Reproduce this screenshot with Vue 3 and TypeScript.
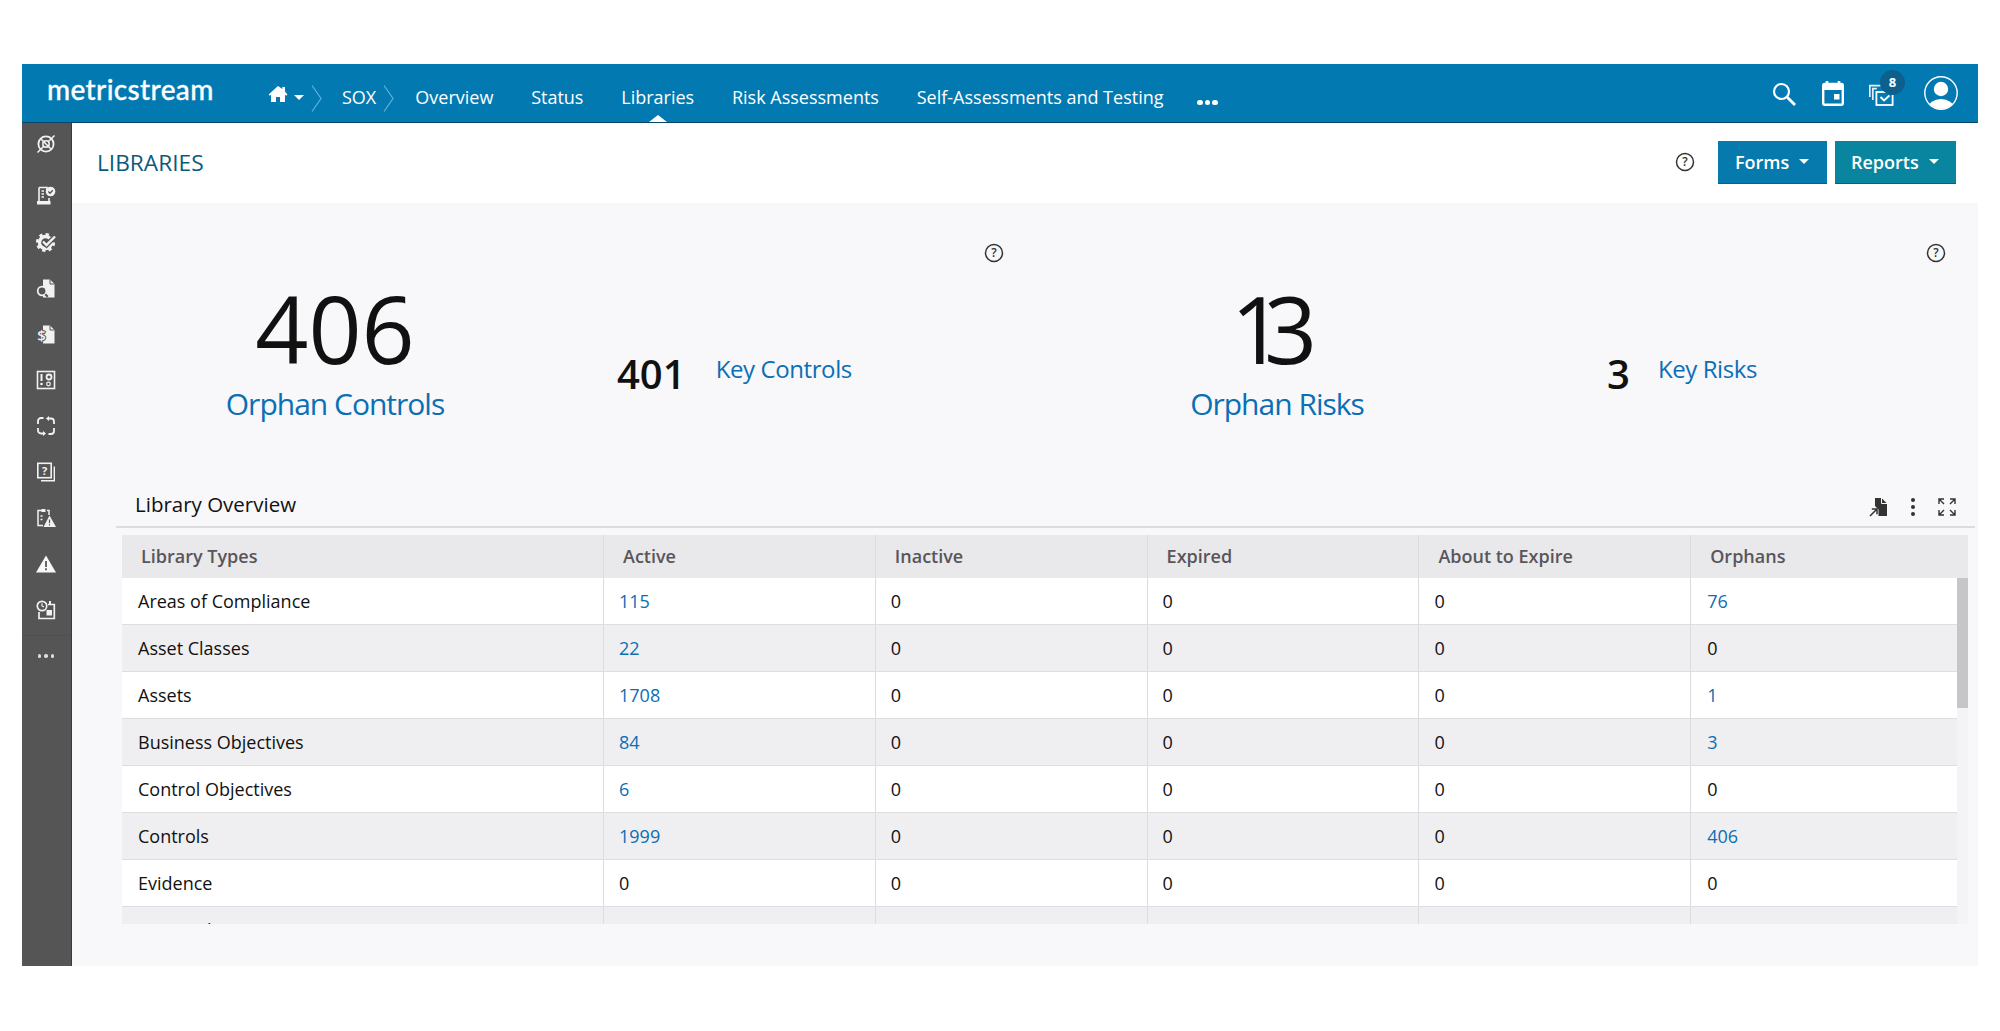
<script setup lang="ts">
interface Row {
  name: string
  values: (number | string)[]
  links: boolean[]
}

const navItems: string[] = ['Overview', 'Status', 'Libraries', 'Risk Assessments', 'Self-Assessments and Testing']
const columns: string[] = ['Library Types', 'Active', 'Inactive', 'Expired', 'About to Expire', 'Orphans']

const rows: Row[] = [
  { name: 'Areas of Compliance', values: [115, 0, 0, 0, 76], links: [true, false, false, false, true] },
  { name: 'Asset Classes', values: [22, 0, 0, 0, 0], links: [true, false, false, false, false] },
  { name: 'Assets', values: [1708, 0, 0, 0, 1], links: [true, false, false, false, true] },
  { name: 'Business Objectives', values: [84, 0, 0, 0, 3], links: [true, false, false, false, true] },
  { name: 'Control Objectives', values: [6, 0, 0, 0, 0], links: [true, false, false, false, false] },
  { name: 'Controls', values: [1999, 0, 0, 0, 406], links: [true, false, false, false, true] },
  { name: 'Evidence', values: [0, 0, 0, 0, 0], links: [false, false, false, false, false] },
  { name: 'Financial Assertions', values: ['', '', '', '', ''], links: [false, false, false, false, false] },
]
</script>

<template>
  <div class="page">
    <div class="frame">
      <header class="topbar">
        <div class="logo">metricstream</div>
        <nav class="nav">
          <svg class="home" viewBox="0 0 20 18"><path d="M10 1 .6 9.400l1.200 1.300L3 9.700V17h5v-5h4v5h5V9.700l1.200 1 1.200-1.300L17 6.400V2h-2.600v2.100z" fill="#fff" /></svg>
          <span class="caret home-caret"></span>
          <svg class="chev first-chev" viewBox="0 0 11 27"><path d="M1 .5 10 13.500 1 26.500" fill="none" stroke="#5fb2de" stroke-width="1.200" /></svg>
          <span class="nav-link sox">SOX</span>
          <svg class="chev second-chev" viewBox="0 0 11 27"><path d="M1 .5 10 13.500 1 26.500" fill="none" stroke="#5fb2de" stroke-width="1.200" /></svg>
          <div class="nav-items">
            <span v-for="item in navItems" :key="item" class="nav-link" :class="{ active: item === 'Libraries' }">{{ item }}</span>
            <span class="nav-dots"><i></i><i></i><i></i></span>
          </div>
        </nav>
        <div class="tools">
          <svg class="t-search" viewBox="0 0 24 24"><circle cx="9.500" cy="9.500" r="7.500" fill="none" stroke="#fff" stroke-width="2.200" /><path d="m15 15 8 8" stroke="#fff" stroke-width="2.800" /></svg>
          <svg class="t-cal" viewBox="0 0 22 25"><path d="M5 0v3M17 0v3" stroke="#fff" stroke-width="2.600" /><rect x="1.200" y="3" width="19.600" height="20.800" rx="1.500" fill="none" stroke="#fff" stroke-width="2.400" /><rect x="1" y="3" width="20" height="6" fill="#fff" /><rect x="12" y="13" width="5.500" height="5.500" fill="#fff" /></svg>
          <div class="t-tasks">
            <svg viewBox="0 0 25 22"><path d="M.8 13V1.600h11M3.800 16V4.600h4" fill="none" stroke="#e6f1f7" stroke-width="1.700" /><rect x="7.400" y="8" width="16.200" height="13" fill="none" stroke="#fff" stroke-width="1.800" /><path d="m11.500 13 3.500 3.500 5.500-5" fill="none" stroke="#fff" stroke-width="1.900" /></svg>
            <span class="badge">8</span>
          </div>
          <svg class="t-user" viewBox="0 0 34 34"><defs><clipPath id="uc"><circle cx="17" cy="17" r="16" /></clipPath></defs><circle cx="17" cy="17" r="16.200" fill="none" stroke="#fff" stroke-width="1.400" /><circle cx="17" cy="13" r="7.200" fill="#fff" /><ellipse cx="17" cy="32" rx="13" ry="9" fill="#fff" clip-path="url(#uc)" /></svg>
        </div>
      </header>

      <div class="body">
        <aside class="sidebar">
          <svg class="s-icon s-first" viewBox="0 0 20 20"><circle cx="10" cy="10" r="7.600" fill="none" stroke="#f2f2f2" stroke-width="1.800" /><circle cx="10" cy="10" r="3.200" fill="none" stroke="#f2f2f2" stroke-width="1.500" /><path d="m1.500 18.500 6-6M12.500 7.500l6-6M5 5l10 10" stroke="#f2f2f2" stroke-width="1.500" /></svg>
          <svg class="s-icon" viewBox="0 0 20 20"><path d="M3 1.500h8v4M3 1.500v13.500M13 12v3" fill="none" stroke="#f2f2f2" stroke-width="1.600" /><path d="M5.500 5h2.500M5.500 8h2.500M5.500 11h2.500" stroke="#f2f2f2" stroke-width="1.700" /><rect x="1" y="15" width="13.500" height="3.500" fill="#f2f2f2" /><circle cx="14.500" cy="5.500" r="4.800" fill="#f2f2f2" /><path d="m12.300 5.500 1.700 1.700 2.800-3" fill="none" stroke="#555" stroke-width="1.300" /></svg>
          <svg class="s-icon" viewBox="0 0 20 20"><circle cx="9.500" cy="10.500" r="6" fill="none" stroke="#f2f2f2" stroke-width="3.400" /><circle cx="9.500" cy="10.500" r="8.300" fill="none" stroke="#f2f2f2" stroke-width="2.600" stroke-dasharray="3.300 3.200" /><path d="m7 9.500 3.500 3.500L19 4.500" fill="none" stroke="#555" stroke-width="5" /><path d="m7 9.500 3.500 3.500L19 4.500" fill="none" stroke="#f2f2f2" stroke-width="2.400" /></svg>
          <svg class="s-icon" viewBox="0 0 20 20"><path d="M7 1.500h7l4.500 4.500v13.500H7z" fill="#f2f2f2" /><path d="M14 1.500V6h4.500" fill="none" stroke="#555" stroke-width="1" /><circle cx="6" cy="13" r="4.300" fill="#555" stroke="#f2f2f2" stroke-width="1.700" /><path d="m9.300 16.300 2.500 2.500" stroke="#555" stroke-width="2" /></svg>
          <svg class="s-icon" viewBox="0 0 20 20"><path d="M7 1.500h7l4.500 4.500v13.500H7z" fill="#f2f2f2" /><path d="M14 1.500V6h4.500" fill="none" stroke="#555" stroke-width="1" /><text x="5.500" y="17" text-anchor="middle" class="s-dollar">$</text></svg>
          <svg class="s-icon" viewBox="0 0 20 20"><rect x="1.500" y="1.500" width="17" height="17" fill="none" stroke="#f2f2f2" stroke-width="1.600" /><path d="M5.500 4v7" stroke="#f2f2f2" stroke-width="2" /><circle cx="5.500" cy="14" r="1.300" fill="#f2f2f2" /><circle cx="13" cy="7" r="2.500" fill="none" stroke="#f2f2f2" stroke-width="1.800" /><circle cx="12.500" cy="14" r="1.800" fill="none" stroke="#f2f2f2" stroke-width="1.200" /></svg>
          <svg class="s-icon" viewBox="0 0 20 20"><path d="M2 8V5a3 3 0 0 1 3-3h2.500M13 2.500h2a3 3 0 0 1 3 3V8M18 12v3a3 3 0 0 1-3 3h-2.500M7 17.500H5a3 3 0 0 1-3-3V12" fill="none" stroke="#f2f2f2" stroke-width="1.800" /><path d="m13 0-3 2.500 3 2.500zM7 15l3 2.500L7 20z" fill="#f2f2f2" /></svg>
          <svg class="s-icon" viewBox="0 0 20 20"><rect x="1.800" y="1.300" width="13.400" height="14.400" fill="none" stroke="#f2f2f2" stroke-width="1.600" /><path d="M18.300 4.500V18.700H5" fill="none" stroke="#f2f2f2" stroke-width="1.400" /><text x="8.500" y="12.800" text-anchor="middle" class="s-q">?</text></svg>
          <svg class="s-icon" viewBox="0 0 20 20"><path d="M8 2.500H2v15h5M11 2.500h2V7" fill="none" stroke="#f2f2f2" stroke-width="1.500" /><rect x="5.500" y="1" width="4" height="3" fill="#f2f2f2" /><path d="M4.500 8h2M4.500 11.500h2" stroke="#f2f2f2" stroke-width="1.500" /><path d="M13.500 7.500 20 19H7.500z" fill="#f2f2f2" /><path d="M13.500 11.500v3.800M13.500 16.200v1.300" stroke="#555" stroke-width="1.200" /></svg>
          <svg class="s-icon" viewBox="0 0 20 20"><path d="M10 1.500 20 18.500H0z" fill="#f7f7f7" /><path d="M10 7v6M10 14.300v2" stroke="#555" stroke-width="1.800" /></svg>
          <svg class="s-icon" viewBox="0 0 20 20"><circle cx="6" cy="6" r="4.700" fill="none" stroke="#f2f2f2" stroke-width="1.700" /><path d="M6 3.300V6l2 1" fill="none" stroke="#f2f2f2" stroke-width="1.200" /><path d="M12 4.500h6.300v14H3V12" fill="none" stroke="#f2f2f2" stroke-width="1.700" /><path d="M14 1v3.500" stroke="#f2f2f2" stroke-width="2" /><rect x="10.500" y="10" width="5.500" height="5.500" fill="#f2f2f2" /></svg>
          <div class="s-more"><i></i><i></i><i></i></div>
        </aside>

        <main class="main">
          <div class="page-bar">
            <h1 class="title">LIBRARIES</h1>
            <div class="actions">
              <svg class="help" viewBox="0 0 20 20"><circle cx="10" cy="10" r="8.500" fill="none" stroke="#333" stroke-width="1.500" /><text x="10" y="14.200" text-anchor="middle" class="help-q">?</text></svg>
              <button class="btn forms">Forms<span class="caret"></span></button>
              <button class="btn reports">Reports<span class="caret"></span></button>
            </div>
          </div>

          <div class="content">
            <section class="kpis">
              <div class="kpi-half">
                <div class="kpi-big">
                  <div class="big-num">406</div>
                  <a class="big-label">Orphan Controls</a>
                </div>
                <div class="kpi-small">
                  <span class="small-num">401</span>
                  <a class="small-label">Key Controls</a>
                </div>
                <div class="kpi-help">
                  <svg class="help" viewBox="0 0 20 20"><circle cx="10" cy="10" r="8.500" fill="none" stroke="#333" stroke-width="1.500" /><text x="10" y="14.200" text-anchor="middle" class="help-q">?</text></svg>
                </div>
              </div>
              <div class="kpi-half">
                <div class="kpi-big">
                  <div class="big-num tight">13</div>
                  <a class="big-label">Orphan Risks</a>
                </div>
                <div class="kpi-small shifted">
                  <span class="small-num">3</span>
                  <a class="small-label">Key Risks</a>
                </div>
                <div class="kpi-help">
                  <svg class="help" viewBox="0 0 20 20"><circle cx="10" cy="10" r="8.500" fill="none" stroke="#333" stroke-width="1.500" /><text x="10" y="14.200" text-anchor="middle" class="help-q">?</text></svg>
                </div>
              </div>
            </section>

            <section class="panel">
              <div class="panel-head">
                <h2 class="panel-title">Library Overview</h2>
                <div class="panel-tools">
                  <svg class="p-icon" viewBox="0 0 20 20"><path d="M6 1h6.500L18 6.500V19H9.500V12.500L6 9z" fill="#333" /><path d="M12.500 1v5.500H18" fill="none" stroke="#f7f6f8" stroke-width="1" /><path d="m1 19 6.500-6.500M2.800 12h5.200v5.200" fill="none" stroke="#333" stroke-width="1.500" /></svg>
                  <span class="kebab"><i></i><i></i><i></i></span>
                  <svg class="p-icon" viewBox="0 0 20 20"><path d="M2 7V2h5M2 2l5 5M13 2h5v5M18 2l-5 5M2 13v5h5M2 18l5-5M18 13v5h-5M18 18l-5-5" fill="none" stroke="#333" stroke-width="1.400" /></svg>
                </div>
              </div>

              <div class="table">
                <div class="thead">
                  <div v-for="c in columns" :key="c" class="th">{{ c }}</div>
                </div>
                <div class="tbody-wrap">
                  <div class="tbody">
                    <div v-for="(r, i) in rows" :key="r.name" class="tr" :class="{ even: i % 2 === 1 }">
                      <div class="td first">{{ r.name }}</div>
                      <div v-for="(v, j) in r.values" :key="j" class="td" :class="{ link: r.links[j] }">{{ v }}</div>
                    </div>
                  </div>
                  <div class="scroll"><div class="thumb"></div></div>
                </div>
              </div>
            </section>
          </div>
        </main>
      </div>
    </div>
  </div>
</template>

<style scoped>
.page {
  box-sizing: border-box;
  height: 1031px;
  padding: 64px 22px 0;
  font-family: "Open Sans", "Noto Sans", sans-serif;
  color: #111;
}
.frame {
  display: flex;
  flex-direction: column;
  height: 902px;
}
.topbar {
  box-sizing: border-box;
  display: flex;
  align-items: center;
  height: 59px;
  flex: none;
  background: #0379b1;
  border-bottom: 1px solid #0a4668;
  color: #fff;
}
.logo {
  width: 246px;
  box-sizing: border-box;
  padding-left: 25px;
  padding-bottom: 8px;
  font-family: Lato, "Open Sans", sans-serif;
  font-size: 28px;
  font-weight: 500;
  letter-spacing: .35px;
  -webkit-text-stroke: .3px #fff;
}
.nav {
  box-sizing: border-box;
  display: flex;
  align-items: center;
  flex: 1;
  height: 100%;
  padding-top: 8px;
}
.home { width: 20px; height: 18px; margin-bottom: 6px; }
.caret {
  display: inline-block;
  width: 0;
  height: 0;
  border-left: 5px solid transparent;
  border-right: 5px solid transparent;
  border-top: 5px solid #fff;
}
.home-caret { margin-left: 6px; }
.chev { width: 11px; height: 27px; flex: none; }
.first-chev { margin-left: 7px; margin-top: 2px; }
.second-chev { margin-left: 7px; margin-top: 2px; }
.nav-link {
  position: relative;
  font-size: 18px;
  line-height: 24px;
  white-space: nowrap;
}
.sox { margin-left: 20px; }
.nav-items {
  display: flex;
  align-items: center;
  gap: 37.800px;
  margin-left: 21px;
}
.active::after {
  content: "";
  position: absolute;
  left: 50%;
  margin-left: -9px;
  bottom: -13px;
  border-left: 9px solid transparent;
  border-right: 9px solid transparent;
  border-bottom: 7px solid #fff;
}
.nav-dots {
  display: flex;
  gap: 2px;
  margin-top: 11px;
  margin-left: -4px;
}
.nav-dots i {
  width: 5.500px;
  height: 5.500px;
  border-radius: 50%;
  background: #fff;
}
.tools {
  display: flex;
  align-items: center;
  padding-right: 20px;
}
.t-search { width: 24px; height: 24px; margin-top: 1px; }
.t-cal { width: 22px; height: 25px; margin-left: 26px; }
.t-tasks {
  position: relative;
  width: 25px;
  height: 22px;
  margin-left: 25px;
  margin-right: 1px;
  margin-top: 3px;
}
.t-tasks svg { width: 25px; height: 22px; display: block; }
.badge {
  position: absolute;
  left: 11px;
  top: -14px;
  width: 25px;
  height: 25px;
  border-radius: 50%;
  background: #0d5f8e;
  color: #fff;
  font-size: 13px;
  font-weight: 700;
  line-height: 24px;
  text-align: center;
}
.t-user { width: 34px; height: 34px; margin-left: 29px; }

.body {
  flex: 1;
  display: flex;
  min-height: 0;
}
.sidebar {
  box-sizing: border-box;
  flex: none;
  width: 50px;
  display: flex;
  flex-direction: column;
  align-items: center;
  background: #555;
  border-right: 1px solid #3a3a3a;
  padding: 11px 1px 0 0;
  gap: 26px;
}
.s-icon { width: 20px; height: 20px; flex: none; overflow: visible; }
.s-first { margin-bottom: 6px; }
.s-q {
  fill: #f2f2f2;
  font-family: "Open Sans", sans-serif;
  font-size: 11px;
  font-weight: 700;
}
.s-dollar {
  fill: #f2f2f2;
  stroke: #555;
  stroke-width: 2px;
  paint-order: stroke;
  font-family: "Open Sans", sans-serif;
  font-size: 15px;
  font-weight: 600;
}
.s-more {
  display: flex;
  justify-content: center;
  gap: 3px;
  width: 100%;
  margin-top: -11px;
  padding-top: 18px;
  border-top: 1px solid #505050;
}
.s-more i {
  width: 3.500px;
  height: 3.500px;
  border-radius: 50%;
  background: #ddd;
}

.main {
  flex: 1;
  min-width: 0;
  display: flex;
  flex-direction: column;
  background: #f8f7f9;
}
.page-bar {
  flex: none;
  height: 80px;
  box-sizing: border-box;
  display: flex;
  align-items: center;
  justify-content: space-between;
  background: #fff;
  padding: 0 22px 2px 25px;
}
.title {
  margin: 0;
  font-size: 22.700px;
  font-weight: 400;
  color: #0c5a7e;
}
.actions {
  display: flex;
  align-items: center;
  gap: 8px;
}
.help { width: 20px; height: 20px; flex: none; display: block; }
.help-q {
  fill: #333;
  font-family: "Open Sans", sans-serif;
  font-size: 12px;
  font-weight: 600;
}
.actions .help { margin-right: 15px; }
.btn {
  display: flex;
  align-items: center;
  height: 43px;
  border: 0;
  border-bottom: 1px solid #0a5f85;
  color: #fff;
  font-family: inherit;
  font-size: 18px;
  font-weight: 600;
  padding: 0 17px;
}
.btn .caret { margin-left: 10px; }
.forms { background: #0679ad; width: 109px; }
.reports { background: #0a859f; width: 121px; padding-left: 16px; }

.content {
  flex: 1;
  min-height: 0;
  display: flex;
  flex-direction: column;
}
.kpis {
  flex: none;
  height: 277px;
  display: grid;
  grid-template-columns: 942px 942px;
}
.kpi-half {
  display: grid;
  grid-template-columns: 526px 280px 1fr;
}
.kpi-big {
  padding-top: 77px;
  text-align: center;
}
.big-num {
  font-size: 93px;
  line-height: 96px;
  color: #111;
}
.big-num.tight {
  letter-spacing: -20px;
  padding-right: 26px;
}
.big-label {
  display: block;
  margin-top: 8px;
  font-size: 30px;
  line-height: 40px;
  letter-spacing: -1px;
  color: #0a6fb5;
}
.kpi-small {
  display: flex;
  align-items: center;
  align-self: start;
  gap: 30px;
  margin-top: 141px;
  padding-left: 19px;
  height: 60px;
}
.kpi-small.shifted {
  gap: 28px;
  padding-left: 67px;
}
.small-num {
  font-size: 40px;
  font-weight: 600;
  line-height: 60px;
  color: #111;
}
.small-label {
  font-size: 24px;
  line-height: 32px;
  padding-bottom: 10px;
  letter-spacing: -.4px;
  color: #0a6fb5;
}
.kpi-help {
  display: flex;
  justify-content: flex-end;
  align-items: flex-start;
  padding: 40px 10px 0 0;
}

.panel {
  flex: none;
  height: 444px;
  margin: 0 3px 0 44px;
  display: flex;
  flex-direction: column;
}
.panel-head {
  flex: none;
  box-sizing: border-box;
  height: 48px;
  display: flex;
  align-items: center;
  justify-content: space-between;
  border-bottom: 2px solid #dcdbdf;
  padding: 2px 18px 0 19px;
}
.panel-title {
  margin: 0;
  font-size: 20.500px;
  font-weight: 400;
  color: #111;
}
.panel-tools {
  display: flex;
  align-items: center;
  gap: 27px;
  padding-top: 5px;
}
.p-icon { width: 20px; height: 20px; display: block; }
.kebab {
  display: flex;
  flex-direction: column;
  gap: 3px;
  width: 4px;
  margin: 0 -5px 0 -5px;
}
.kebab i {
  width: 4px;
  height: 4px;
  border-radius: 50%;
  background: #333;
}
.table {
  margin: 7px 7px 0 6px;
  display: flex;
  flex-direction: column;
  height: 389px;
}
.thead {
  flex: none;
  display: grid;
  grid-template-columns: 482px repeat(5, 271.800px) 1fr;
  height: 43px;
  background: #e9e8eb;
}
.th {
  box-sizing: border-box;
  padding-left: 19px;
  font-size: 18px;
  font-weight: 600;
  line-height: 43px;
  color: #58565a;
  border-right: 1px solid #dcdbdf;
}
.th:last-child { border-right: 0; }
.tbody-wrap {
  flex: 1;
  min-height: 0;
  display: flex;
  overflow: hidden;
}
.tbody { flex: 1; min-width: 0; overflow: hidden; }
.tr {
  box-sizing: border-box;
  display: grid;
  grid-template-columns: 482px repeat(5, 271.800px) 1fr;
  height: 47px;
  background: #fff;
  border-bottom: 1px solid #dedde1;
}
.tr.even { background: #efeef0; }
.td {
  box-sizing: border-box;
  padding-left: 15px;
  font-size: 18px;
  line-height: 46px;
  color: #111;
  border-right: 1px solid #dcdbdf;
}
.td.first { padding-left: 16px; }
.td:last-child { border-right: 0; padding-left: 16px; }
.link { color: #0a6fb5; }
.scroll {
  flex: none;
  width: 11px;
  background: #f4f3f5;
}
.thumb {
  height: 130px;
  background: #c6c6c8;
}
</style>

<style>
html, body {
  margin: 0;
  padding: 0;
  background: #fff;
  overflow: hidden;
}
</style>
